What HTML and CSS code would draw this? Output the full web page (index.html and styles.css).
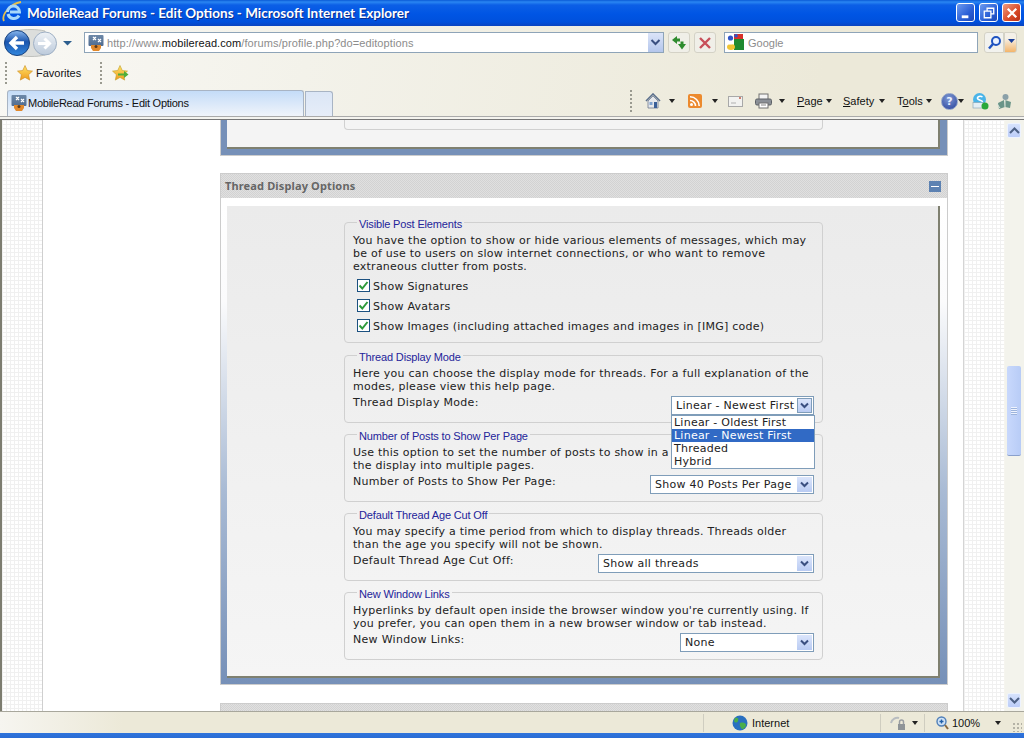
FILE: index.html
```html
<!DOCTYPE html>
<html lang="en">
<head>
<meta charset="utf-8">
<title>MobileRead Forums - Edit Options - Microsoft Internet Explorer</title>
<link rel="stylesheet" href="styles.css">
</head>
<body>
<div class="window">
  <svg width="0" height="0" class="defs">
    <defs>
      <linearGradient id="gBack" x1="0" y1="0" x2="0" y2="1"><stop offset="0" stop-color="#8ab8ee"/><stop offset=".45" stop-color="#1a55ae"/><stop offset="1" stop-color="#3388de"/></linearGradient>
      <linearGradient id="gFwd" x1="0" y1="0" x2="0" y2="1"><stop offset="0" stop-color="#eef2f6"/><stop offset="1" stop-color="#bccadb"/></linearGradient>
      <linearGradient id="gStar" x1="0" y1="0" x2="0" y2="1"><stop offset="0" stop-color="#ffe56a"/><stop offset="1" stop-color="#f09a1c"/></linearGradient>
      <linearGradient id="gFav" x1="0" y1="0" x2="0" y2="1"><stop offset="0" stop-color="#6d88a8"/><stop offset="1" stop-color="#4f6c90"/></linearGradient>
    </defs>
  </svg>

  <header class="titlebar">
    <svg class="ie-logo" width="20" height="22" viewBox="0 0 20 22"><path d="M2 20C-1 14 8 3 19 1" fill="none" stroke="#e8c14a" stroke-width="1.800"/><path d="M5.500 11a6 6 0 0 1 12 0H8m9 3.500A6 6 0 0 1 6 13" fill="none" stroke="#a8d8fa" stroke-width="3"/></svg>
    <h1 class="title-text">MobileRead Forums - Edit Options - Microsoft Internet Explorer</h1>
    <div class="win-buttons">
      <div class="win-btn"><svg width="18" height="18" viewBox="0 0 19 19"><rect x="5" y="12" width="7" height="3" fill="#fff"/></svg></div>
      <div class="win-btn"><svg width="18" height="18" viewBox="0 0 19 19"><path d="M7.500 7V4.500h7v6H12M4.500 7.500h7v7h-7z" fill="none" stroke="#fff" stroke-width="1.400"/></svg></div>
      <div class="win-btn win-close"><svg width="18" height="18" viewBox="0 0 19 19"><path d="M5 5l9 9M14 5l-9 9" stroke="#fff" stroke-width="2.400"/></svg></div>
    </div>
  </header>

  <div class="chrome">
    <div class="nav-row">
      <div class="nav-ball">
        <svg width="72" height="32" viewBox="0 0 72 32">
          <path d="M17 4c8-2 20-2 28 0v24c-8 2-20 2-28 0z" fill="#dcdedc" stroke="#b4b6b2" stroke-width=".8"/>
          <circle cx="45" cy="16.500" r="11.500" fill="url(#gFwd)" stroke="#9fb0c4"/>
          <path d="M38 16.500h11M44.500 11.500l5 5-5 5" fill="none" stroke="#fff" stroke-width="3"/>
          <circle cx="17" cy="16" r="12.500" fill="url(#gBack)" stroke="#16417f"/>
          <path d="M24 16H12M17 10l-6 6 6 6" fill="none" stroke="#fff" stroke-width="3.400"/>
          <path d="M63 14h9l-4.500 4.500z" fill="#2c5e8e"/>
        </svg>
      </div>
      <div class="addr">
        <svg class="favicon" width="16" height="16" viewBox="0 0 16 16"><rect width="15" height="11" x="0.500" fill="url(#gFav)" rx="1"/><path d="M5 2l3 3M8 2L5 5M10 4l3 3M13 4l-3 3" stroke="#fff" stroke-width="1.200"/><path d="M3 10h10v3l-2 3H5l-2-3z" fill="#e2892c"/><circle cx="8" cy="11.500" r="1.500" fill="#5b3a1a"/></svg>
        <span class="url">http://www.<b class="url-host">mobileread.com</b>/forums/profile.php?do=editoptions</span>
        <span class="addr-drop"><svg width="15" height="19" viewBox="0 0 15 19"><path d="M3.500 7l4 4 4-4" fill="none" stroke="#3a4f80" stroke-width="2"/></svg></span>
      </div>
      <div class="nav-btn nav-refresh"><svg width="16" height="16" viewBox="0 0 16 16"><path d="M1 5l5-4v2.500h3v3H6V9zM15 9l-4 5.500L7 9h2.500V6.500h3V9z" fill="#2e8b2e"/></svg></div>
      <div class="nav-btn nav-stop"><svg width="14" height="14" viewBox="0 0 14 14"><path d="M2 2l10 10M12 2L2 12" stroke="#c8505a" stroke-width="2.400"/></svg></div>
      <div class="search">
        <svg class="google" width="17" height="17" viewBox="0 0 17 17"><rect x="7" width="9" height="7" fill="#d8312a"/><rect x="7" y="5" width="10" height="11" fill="#1f8a30"/><ellipse cx="4" cy="13" rx="4" ry="3" fill="#f0c432"/><rect x="1" y="7" width="5" height="3.500" rx="1.500" fill="#fff"/><circle cx="3.500" cy="4" r="2.600" fill="#2f55c8"/><circle cx="9" cy="1.800" r="1.800" fill="#2f55c8"/></svg>
        <span class="search-text">Google</span>
      </div>
      <div class="search-go"><svg width="15" height="15" viewBox="0 0 15 15"><circle cx="9" cy="6" r="4" fill="#eaf2ff" stroke="#1f53c0" stroke-width="2"/><path d="M6 9l-4 4.500" stroke="#1f53c0" stroke-width="2.500"/></svg></div>
      <div class="search-drop"><svg width="7" height="4" viewBox="0 0 7 4"><path d="M0 0h7L3.500 4z" fill="#1a3f9a"/></svg></div>
    </div>

    <div class="fav-row">
      <span class="grip"></span>
      <svg class="fav-star" width="16" height="16" viewBox="0 0 16 16"><path d="M8 .5l2.300 5 5.200.6-3.900 3.600 1.100 5.400L8 12.400l-4.700 2.700 1.100-5.400L.5 6.100l5.200-.6z" fill="url(#gStar)" stroke="#c98a1e" stroke-width=".6"/></svg>
      <span class="fav-label">Favorites</span>
      <span class="grip grip-2"></span>
      <svg class="fav-add" width="17" height="16" viewBox="0 0 17 16"><path d="M8 .5l2.300 5 5.200.6-3.900 3.600 1.100 5.400L8 12.400l-4.700 2.700 1.100-5.400L.5 6.100l5.200-.6z" fill="url(#gStar)" stroke="#bfa02a" stroke-width=".6"/><path d="M6 8.500h6V6l4.500 3.500L12 13v-2.500H6z" fill="#4fae3a"/></svg>
    </div>

    <div class="tab-row">
      <div class="tab">
        <svg width="16" height="16" viewBox="0 0 16 16"><rect width="15" height="11" x="0.500" fill="url(#gFav)" rx="1"/><path d="M5 2l3 3M8 2L5 5M10 4l3 3M13 4l-3 3" stroke="#fff" stroke-width="1.200"/><path d="M3 10h10v3l-2 3H5l-2-3z" fill="#e2892c"/><circle cx="8" cy="11.500" r="1.500" fill="#5b3a1a"/></svg>
        <span class="tab-label">MobileRead Forums - Edit Options</span>
      </div>
      <div class="tab-new"></div>
      <div class="tools">
        <span class="grip"></span>
        <svg class="t-home" width="16" height="16" viewBox="0 0 16 16"><path d="M1 8l7-7 7 7" fill="none" stroke="#5b6f8c" stroke-width="1.600"/><path d="M3 8l5-5 5 5v7H3z" fill="#e6e8ec" stroke="#6c7a90" stroke-width=".8"/><rect x="9" y="9" width="3" height="6" fill="#3a5f98"/><rect x="4.500" y="9" width="3" height="3" fill="#7fa2cf"/></svg>
        <span class="caret t-c1"></span>
        <svg class="t-rss" width="14" height="14" viewBox="0 0 14 14"><rect width="14" height="14" rx="2" fill="#ec8a2e"/><circle cx="3.500" cy="10.500" r="1.500" fill="#fff"/><path d="M2 6.500a5.500 5.500 0 0 1 5.500 5.500M2 2.800A9.200 9.200 0 0 1 11.200 12" fill="none" stroke="#fff" stroke-width="1.600"/></svg>
        <span class="caret t-c2"></span>
        <svg class="t-mail" width="15" height="11" viewBox="0 0 15 11"><rect x=".5" y=".5" width="14" height="10" fill="#f2f2f0" stroke="#a8a8a8"/><path d="M3 7h5" stroke="#b0b0b0"/><rect x="11" y="1" width="2" height="2" fill="#d08070"/></svg>
        <svg class="t-print" width="17" height="16" viewBox="0 0 17 16"><rect x="4" y="1" width="9" height="6" fill="#f4f4f4" stroke="#707070"/><rect x=".5" y="6" width="16" height="6" rx="1.500" fill="#8a8f96" stroke="#5c6066"/><rect x="4" y="10" width="9" height="5" fill="#fff" stroke="#707070"/><path d="M6 12h5" stroke="#888"/></svg>
        <span class="caret t-c3"></span>
        <span class="t-menu t-page"><u>P</u>age</span>
        <span class="caret t-c4"></span>
        <span class="t-menu t-safety"><u>S</u>afety</span>
        <span class="caret t-c5"></span>
        <span class="t-menu t-tools">T<u>o</u>ols</span>
        <span class="caret t-c6"></span>
        <span class="t-help">?</span>
        <span class="caret t-c7"></span>
        <svg class="t-skype" width="17" height="17" viewBox="0 0 17 17"><circle cx="7.500" cy="6.500" r="6.500" fill="#4ab4e8"/><path d="M10.500 4C8.500 2.500 5 3.500 5.500 5.500S10.500 7 10.500 9" fill="none" stroke="#fff" stroke-width="1.500"/><rect x="1" y="9.500" width="11" height="5.500" fill="#e4eef4" stroke="#7f9fb2" stroke-width=".6"/><circle cx="13" cy="13" r="3.500" fill="#2aa83a"/></svg>
        <svg class="t-research" width="17" height="17" viewBox="0 0 17 17"><circle cx="9.500" cy="4" r="3" fill="#8aa0a8"/><path d="M9 7l6 2-1 6-5-1zM2 10l6-3 1 7-6 2z" fill="#6a9488"/><path d="M9 7v7M1 11l3 4" stroke="#dfe8e0"/></svg>
      </div>
    </div>
  </div>

  <main class="content">
    <div class="page">
      <div class="grid-strip"></div>
      <div class="forum">
        <section class="panel-tail">
          <div class="frame frame-tail">
            <div class="frame-inner inner-tail"><div class="tail-fieldset"></div></div>
          </div>
        </section>

        <section class="panel">
          <div class="panel-head">
            <h2 class="panel-title">Thread Display Options</h2>
            <span class="collapse"></span>
          </div>
          <div class="frame">
            <div class="frame-inner">
              <fieldset class="fs fs-first">
                <legend>Visible Post Elements</legend>
                <p class="desc">You have the option to show or hide various elements of messages, which may<br>be of use to users on slow internet connections, or who want to remove<br>extraneous clutter from posts.</p>
                <div class="checks">
                  <label class="check"><span class="box"><svg width="11" height="11" viewBox="0 0 11 11"><path d="M1.500 5.500l2.800 3L9.500 2" fill="none" stroke="#2f9a3a" stroke-width="2"/></svg></span>Show Signatures</label>
                  <label class="check"><span class="box"><svg width="11" height="11" viewBox="0 0 11 11"><path d="M1.500 5.500l2.800 3L9.500 2" fill="none" stroke="#2f9a3a" stroke-width="2"/></svg></span>Show Avatars</label>
                  <label class="check"><span class="box"><svg width="11" height="11" viewBox="0 0 11 11"><path d="M1.500 5.500l2.800 3L9.500 2" fill="none" stroke="#2f9a3a" stroke-width="2"/></svg></span>Show Images (including attached images and images in [IMG] code)</label>
                </div>
              </fieldset>

              <fieldset class="fs">
                <legend>Thread Display Mode</legend>
                <p class="desc">Here you can choose the display mode for threads. For a full explanation of the<br>modes, please view this help page.</p>
                <div class="opt-row">
                  <span class="opt-label">Thread Display Mode:</span>
                  <div class="select sel-mode">
                    <span class="sel-text">Linear - Newest First</span>
                    <span class="sel-btn sel-btn-focus"><svg width="9" height="7" viewBox="0 0 9 7"><path d="M1 1.500l3.500 3.500L8 1.500" fill="none" stroke="#3a4f80" stroke-width="2"/></svg></span>
                    <ul class="popup">
                      <li>Linear - Oldest First</li>
                      <li class="sel-on">Linear - Newest First</li>
                      <li>Threaded</li>
                      <li>Hybrid</li>
                    </ul>
                  </div>
                </div>
              </fieldset>

              <fieldset class="fs">
                <legend>Number of Posts to Show Per Page</legend>
                <p class="desc">Use this option to set the number of posts to show in a thread before splitting<br>the display into multiple pages.</p>
                <div class="opt-row">
                  <span class="opt-label">Number of Posts to Show Per Page:</span>
                  <div class="select sel-posts">
                    <span class="sel-text">Show 40 Posts Per Page</span>
                    <span class="sel-btn"><svg width="9" height="7" viewBox="0 0 9 7"><path d="M1 1.500l3.500 3.500L8 1.500" fill="none" stroke="#3a4f80" stroke-width="2"/></svg></span>
                  </div>
                </div>
              </fieldset>

              <fieldset class="fs">
                <legend>Default Thread Age Cut Off</legend>
                <p class="desc">You may specify a time period from which to display threads. Threads older<br>than the age you specify will not be shown.</p>
                <div class="opt-row">
                  <span class="opt-label">Default Thread Age Cut Off:</span>
                  <div class="select sel-age">
                    <span class="sel-text">Show all threads</span>
                    <span class="sel-btn"><svg width="9" height="7" viewBox="0 0 9 7"><path d="M1 1.500l3.500 3.500L8 1.500" fill="none" stroke="#3a4f80" stroke-width="2"/></svg></span>
                  </div>
                </div>
              </fieldset>

              <fieldset class="fs">
                <legend>New Window Links</legend>
                <p class="desc">Hyperlinks by default open inside the browser window you're currently using. If<br>you prefer, you can open them in a new browser window or tab instead.</p>
                <div class="opt-row">
                  <span class="opt-label">New Window Links:</span>
                  <div class="select sel-links">
                    <span class="sel-text">None</span>
                    <span class="sel-btn"><svg width="9" height="7" viewBox="0 0 9 7"><path d="M1 1.500l3.500 3.500L8 1.500" fill="none" stroke="#3a4f80" stroke-width="2"/></svg></span>
                  </div>
                </div>
              </fieldset>
            </div>
          </div>
        </section>

        <section class="panel-next"></section>
      </div>
      <div class="grid-strip grid-right"></div>
      <div class="page-edge"></div>
    </div>
    <aside class="scrollbar">
      <span class="sb-btn"><svg width="11" height="7" viewBox="0 0 11 7"><path d="M1 6l4.500-4.500L10 6" fill="none" stroke="#4d6185" stroke-width="2"/></svg></span>
      <span class="sb-thumb"><span class="sb-grip"></span></span>
      <span class="sb-btn sb-down"><svg width="11" height="7" viewBox="0 0 11 7"><path d="M1 1l4.500 4.500L10 1" fill="none" stroke="#4d6185" stroke-width="2"/></svg></span>
    </aside>
  </main>

  <footer class="status">
    <span class="st-sep st-s1"></span>
    <svg class="st-globe" width="16" height="16" viewBox="0 0 16 16"><circle cx="8" cy="8" r="7.500" fill="#2a70c0"/><path d="M3 3c3-1 4 1 3 3S3 8 2 6zM8 8c3-1 6 0 6 2s-3 5-4 4-3-4-2-6z" fill="#4aae4a"/></svg>
    <span class="st-zone">Internet</span>
    <span class="st-sep st-s2"></span>
    <svg class="st-lock" width="16" height="16" viewBox="0 0 16 16"><path d="M1 8c1-4 5-6 8-5" fill="none" stroke="#b8bcc0" stroke-width="2"/><rect x="8" y="9" width="7" height="6" fill="#8f9498"/><path d="M9.500 9V7a2 2 0 0 1 4 0v2" fill="none" stroke="#9a9ea2" stroke-width="1.500"/></svg>
    <span class="caret st-c1"></span>
    <span class="st-sep st-s3"></span>
    <svg class="st-zoom" width="13" height="14" viewBox="0 0 13 14"><circle cx="5.500" cy="5.500" r="4.500" fill="#cfe2f6" stroke="#4f7fb8" stroke-width="1.400"/><path d="M3.500 5.500h4M5.500 3.500v4" stroke="#1f5fa8" stroke-width="1.400"/><path d="M9 9l3 4" stroke="#8a6a40" stroke-width="2"/></svg>
    <span class="st-pct">100%</span>
    <span class="caret st-c2"></span>
    <span class="st-resize"></span>
  </footer>
  <div class="taskedge"></div>
</div>
</body>
</html>
```
FILE: styles.css
```css
* { box-sizing: border-box; }
html, body { margin: 0; padding: 0; }
body { background: #fff; font-family: "DejaVu Sans", sans-serif; }
.defs { position: absolute; }
svg { display: block; flex: none; }
.window { width: 1024px; height: 738px; display: flex; flex-direction: column; overflow: hidden; }

/* title bar */
.titlebar {
  height: 26px; flex: none; display: flex; align-items: center; padding: 0 3px 0 2px;
  background: linear-gradient(#0a5ad6 0, #2a86f2 2px, #0c5fe6 5px, #0055e4 14px, #0050dc 22px, #0a44c0 26px);
}
.ie-logo { margin-right: 5px; margin-top: -2px; }
.title-text { margin: 0; flex: 1; color: #fff; font: bold 13.500px/26px Lato, sans-serif; letter-spacing: 0; white-space: nowrap; text-shadow: 1px 1px 0 #0a2f90; }
.win-buttons { display: flex; gap: 4px; margin-top: -1px; }
.win-btn { width: 19px; height: 19px; border: 1px solid #fff; border-radius: 3px; background: linear-gradient(135deg, #6d9bf0, #2a5fd6 60%, #1c48b8); }
.win-close { background: linear-gradient(135deg, #ee9c80, #d84a28 60%, #b83018); }

/* chrome */
.chrome { height: 94px; flex: none; display: flex; flex-direction: column; background: linear-gradient(100deg, #f9f8f4 0, #f3f2ea 30%, #ece9d9 80%); }
.nav-row { height: 34px; display: flex; align-items: center; }
.nav-ball { width: 84px; flex: none; }
.addr { width: 580px; height: 21px; margin-top: -1px; background: #fff; border: 1px solid #8ea4b8; display: flex; align-items: center; padding-left: 3px; }
.favicon { margin-right: 3px; }
.url { flex: 1; font: 11px "Liberation Sans", sans-serif; letter-spacing: .09px; color: #8c8c8c; white-space: nowrap; }
.url-host { font-weight: normal; color: #111; }
.addr-drop { width: 15px; height: 19px; background: linear-gradient(#dbe4f8, #b4c6ec); }
.nav-btn { width: 22px; height: 21px; margin-top: -1px; border: 1px solid #d4d2c6; border-radius: 3px; display: flex; align-items: center; justify-content: center; background: #f0efe8; }
.nav-refresh { margin-left: 4px; }
.nav-stop { margin-left: 4px; }
.search { width: 254px; height: 21px; margin: -1px 0 0 8px; background: #fff; border: 1px solid #8ea4b8; display: flex; align-items: center; padding-left: 2px; }
.google { margin-right: 4px; }
.search-text { font: 11px "Liberation Sans", sans-serif; color: #8c8c8c; }
.search-go { width: 20px; height: 21px; margin: -1px 0 0 6px; border: 1px solid #d4d2c6; border-radius: 3px 0 0 3px; display: flex; align-items: center; justify-content: center; background: #f2f2ee; }
.search-drop { width: 13px; height: 21px; margin-top: -1px; padding: 6px 0 0 3px; border: 1px solid #d4d2c6; border-radius: 0 3px 3px 0; background: linear-gradient(#f4f0e8 30%, #f4b56a); }

.fav-row { height: 26px; display: flex; align-items: center; padding-left: 5px; }
.grip { width: 2px; height: 22px; flex: none; background: repeating-linear-gradient(#9a9a90 0 2px, transparent 2px 4px); }
.fav-star { margin-left: 10px; }
.fav-label { margin-left: 3px; width: 45px; font: 11px "Liberation Sans", sans-serif; color: #111; white-space: nowrap; }
.grip-2 { margin-left: 19px; }
.fav-add { margin-left: 10px; }

.tab-row { height: 34px; display: flex; align-items: flex-start; padding: 4px 0 0 7px; border-bottom: 1px solid #777; box-shadow: inset 0 -2px 0 #f4f3ee, inset 0 -3px 0 #aaa; }
.tab { width: 297px; height: 26px; flex: none; display: flex; align-items: center; padding: 0 0 1px 3px; gap: 1px; border: 1px solid #a8b4c4; border-bottom: 0; border-radius: 3px 3px 0 0; background: linear-gradient(#c4dcf8, #f0f4fa); }
.tab-label { font: 11px "Liberation Sans", sans-serif; letter-spacing: -.25px; color: #111; white-space: nowrap; }
.tab-new { width: 28px; height: 25px; flex: none; margin: 1px 0 0 1px; border: 1px solid #a8b4c4; border-bottom: 0; border-radius: 0 3px 0 0; background: linear-gradient(#dbe6f6, #e6edf8); }
.tools { flex: 1; height: 22px; margin-left: 297px; display: flex; align-items: center; }
.caret { width: 0; height: 0; flex: none; border: 3px solid transparent; border-top: 4px solid #222; border-bottom: 0; }
.t-home { margin-left: 13px; }
.t-c1 { margin-left: 8px; }
.t-rss { margin-left: 13px; }
.t-c2 { margin-left: 10px; }
.t-mail { margin-left: 10px; }
.t-print { margin-left: 12px; }
.t-c3 { margin-left: 7px; }
.t-menu { flex: none; font: 11px "Liberation Sans", sans-serif; color: #111; white-space: nowrap; }
.t-page { margin-left: 12px; width: 25px; }
.t-c4 { margin-left: 4px; }
.t-safety { margin-left: 11px; width: 33px; }
.t-c5 { margin-left: 3px; }
.t-tools { margin-left: 12px; width: 26px; }
.t-c6 { margin-left: 3px; }
.t-help { width: 17px; height: 17px; margin-left: 9px; flex: none; border-radius: 50%; border: 1px solid #8fa2c8; background: radial-gradient(circle at 45% 30%, #7f9ad4, #27409a); color: #e8eeff; font: bold 11px/15px "DejaVu Sans", sans-serif; text-align: center; }
.t-c7 { margin-left: 0; }
.t-skype { margin-left: 8px; }
.t-research { margin-left: 7px; }

/* content */
.content { flex: 1; min-height: 0; display: flex; overflow: hidden; border-left: 2px solid #7d7d70; }
.page { flex: 1; min-width: 0; display: flex; background: #fff; }
.grid-strip { width: 41px; flex: none; border-right: 1px solid #cfcfcf; background-color: #fff; background-image: linear-gradient(#f0f0f0 1px, transparent 1px), linear-gradient(90deg, #f0f0f0 1px, transparent 1px); background-size: 4px 4px; }
.grid-right { width: 41px; border-right: 0; border-left: 1px solid #d4d4d4; }
.forum { width: 920px; flex: none; padding-left: 177px; overflow: hidden; }
.page-edge { flex: 1; background: linear-gradient(90deg, #faf9f5, #f1f0e8); }

.panel-tail { width: 728px; height: 36px; border: 1px solid #ccc; border-top: 0; }
.frame { padding: 0 7px 6px 6px; background: linear-gradient(#fff 0, #fbfbfc 20%, #a8bad4 60%, #7690b8 100%); }
.frame-tail { height: 35px; background: #7690b8; }
.frame-inner { height: 100%; background: linear-gradient(#ebebeb, #f5f5f5); border-right: 2px solid #7f8070; border-bottom: 2px solid #7f8070; padding-left: 117px; }
.inner-tail { background: #f4f4f4; }
.tail-fieldset { width: 479px; height: 10px; border: 1px solid #d0d0d0; border-top: 0; border-radius: 0 0 4px 4px; }

.panel { width: 728px; margin-top: 17px; border: 1px solid #ccc; }
.panel-head { height: 24px; display: flex; align-items: center; justify-content: space-between; padding: 0 6px 0 4px; background-color: #e0e0e0; background-image: conic-gradient(#d2d2d2 25%, transparent 0 50%, #d2d2d2 0 75%, transparent 0); background-size: 2px 2px; }
.panel-title { margin: 0; font: bold 11px/24px "Noto Sans", sans-serif; letter-spacing: .14px; color: #666; }
.collapse { width: 12px; height: 11px; position: relative; background: #5d82b2; }
.collapse::after { content: ""; position: absolute; left: 2px; right: 2px; top: 5px; height: 1px; background: #fff; }
.panel > .frame { margin-top: 8px; height: 478px; }
.panel .frame-inner { padding-top: 8px; }

.fs { width: 479px; margin: 0 0 3px; padding: 0 8px 7px; border: 1px solid #d0d0d0; border-radius: 4px; min-width: 0; }
.fs-first { margin-bottom: 4px; }
.fs legend { margin-left: 4px; padding: 4px 2px 0; font: 11px/13px "Liberation Sans", sans-serif; letter-spacing: -.15px; color: #24249a; }
.desc { margin: 3px 0 0; font: 11px/13px "DejaVu Sans", sans-serif; letter-spacing: .24px; color: #222; white-space: nowrap; }
.checks { margin: 3px 0 -1px; }
.check { height: 20px; display: flex; align-items: center; padding-left: 4px; font: 11px/13px "DejaVu Sans", sans-serif; letter-spacing: .24px; color: #222; }
.box { width: 13px; height: 13px; margin: -1px 3px 0 0; flex: none; padding: 0; border: 1px solid #1c5180; background: #fff; }
.opt-row { margin-top: 3px; display: flex; justify-content: space-between; font: 11px/13px "DejaVu Sans", sans-serif; letter-spacing: .3px; color: #222; }
.select { height: 19px; position: relative; display: flex; align-items: center; justify-content: space-between; padding: 0 1px 0 4px; border: 1px solid #7f9db9; background: #fff; font: 11px/13px "DejaVu Sans", sans-serif; letter-spacing: .27px; }
.sel-mode { width: 143px; }
.sel-posts { width: 164px; }
.sel-age { width: 216px; }
.sel-links { width: 134px; }
.sel-text { white-space: nowrap; }
.sel-btn { width: 15px; height: 15px; flex: none; display: flex; align-items: center; justify-content: center; background: linear-gradient(#dbe5fb, #b9cbf3); }
.sel-btn-focus { border: 1px solid #7f9db9; }
.popup { position: absolute; z-index: 2; left: -1px; top: 18px; width: 144px; margin: 0; padding: 0; list-style: none; border: 1px solid #7f9db9; background: #fff; }
.popup li { height: 13px; padding-left: 2px; font: 11px/13px "DejaVu Sans", sans-serif; letter-spacing: .24px; color: #222; white-space: nowrap; }
.popup .sel-on { background: #316ac5; color: #fff; }

.panel-next { width: 728px; height: 20px; margin-top: 18px; border: 1px solid #ccc; background-color: #e0e0e0; background-image: conic-gradient(#d2d2d2 25%, transparent 0 50%, #d2d2d2 0 75%, transparent 0); background-size: 2px 2px; }

/* scrollbar */
.scrollbar { width: 19px; flex: none; padding: 3px 3px 3px 2px; display: flex; flex-direction: column; background: #f3f3ec; }
.sb-btn { height: 15px; flex: none; display: flex; align-items: center; justify-content: center; border-radius: 2px; border: 1px solid #eef3fe; background: linear-gradient(#d6e2fc, #bccdf8); }
.sb-thumb { height: 90px; margin-top: 228px; flex: none; display: flex; align-items: center; justify-content: center; border-radius: 2px; border-bottom: 1px solid #8aa0cc; background: linear-gradient(90deg, #c8d8fc, #b8ccf6); }
.sb-grip { width: 6px; height: 8px; background: repeating-linear-gradient(#eef3fe 0 1px, #9db4dc 1px 2px); }
.sb-down { margin-top: auto; }

/* status */
.status { height: 22px; flex: none; display: flex; align-items: center; padding: 1px 0 0 703px; border-top: 1px solid #a8a79c; background: linear-gradient(90deg, #f6f5f0 0, #ece9d8 12%); }
.st-sep { width: 1px; height: 18px; flex: none; background: #cfcdc0; }
.st-globe { margin-left: 28px; }
.st-zone { margin-left: 4px; width: 128px; font: 11px "Liberation Sans", sans-serif; color: #111; }
.st-lock { margin-left: 9px; }
.st-c1 { margin-left: 6px; }
.st-s3 { margin-left: 6px; }
.st-zoom { margin-left: 11px; }
.st-pct { margin-left: 3px; width: 43px; font: 11px "Liberation Sans", sans-serif; color: #111; }
.st-resize { width: 10px; height: 10px; margin: 8px 0 0 11px; background-image: radial-gradient(#b4b2a6 1px, transparent 1px); background-size: 4px 4px; }
.taskedge { height: 5px; flex: none; background: linear-gradient(#2f74dc, #2a6cd4); }
```
